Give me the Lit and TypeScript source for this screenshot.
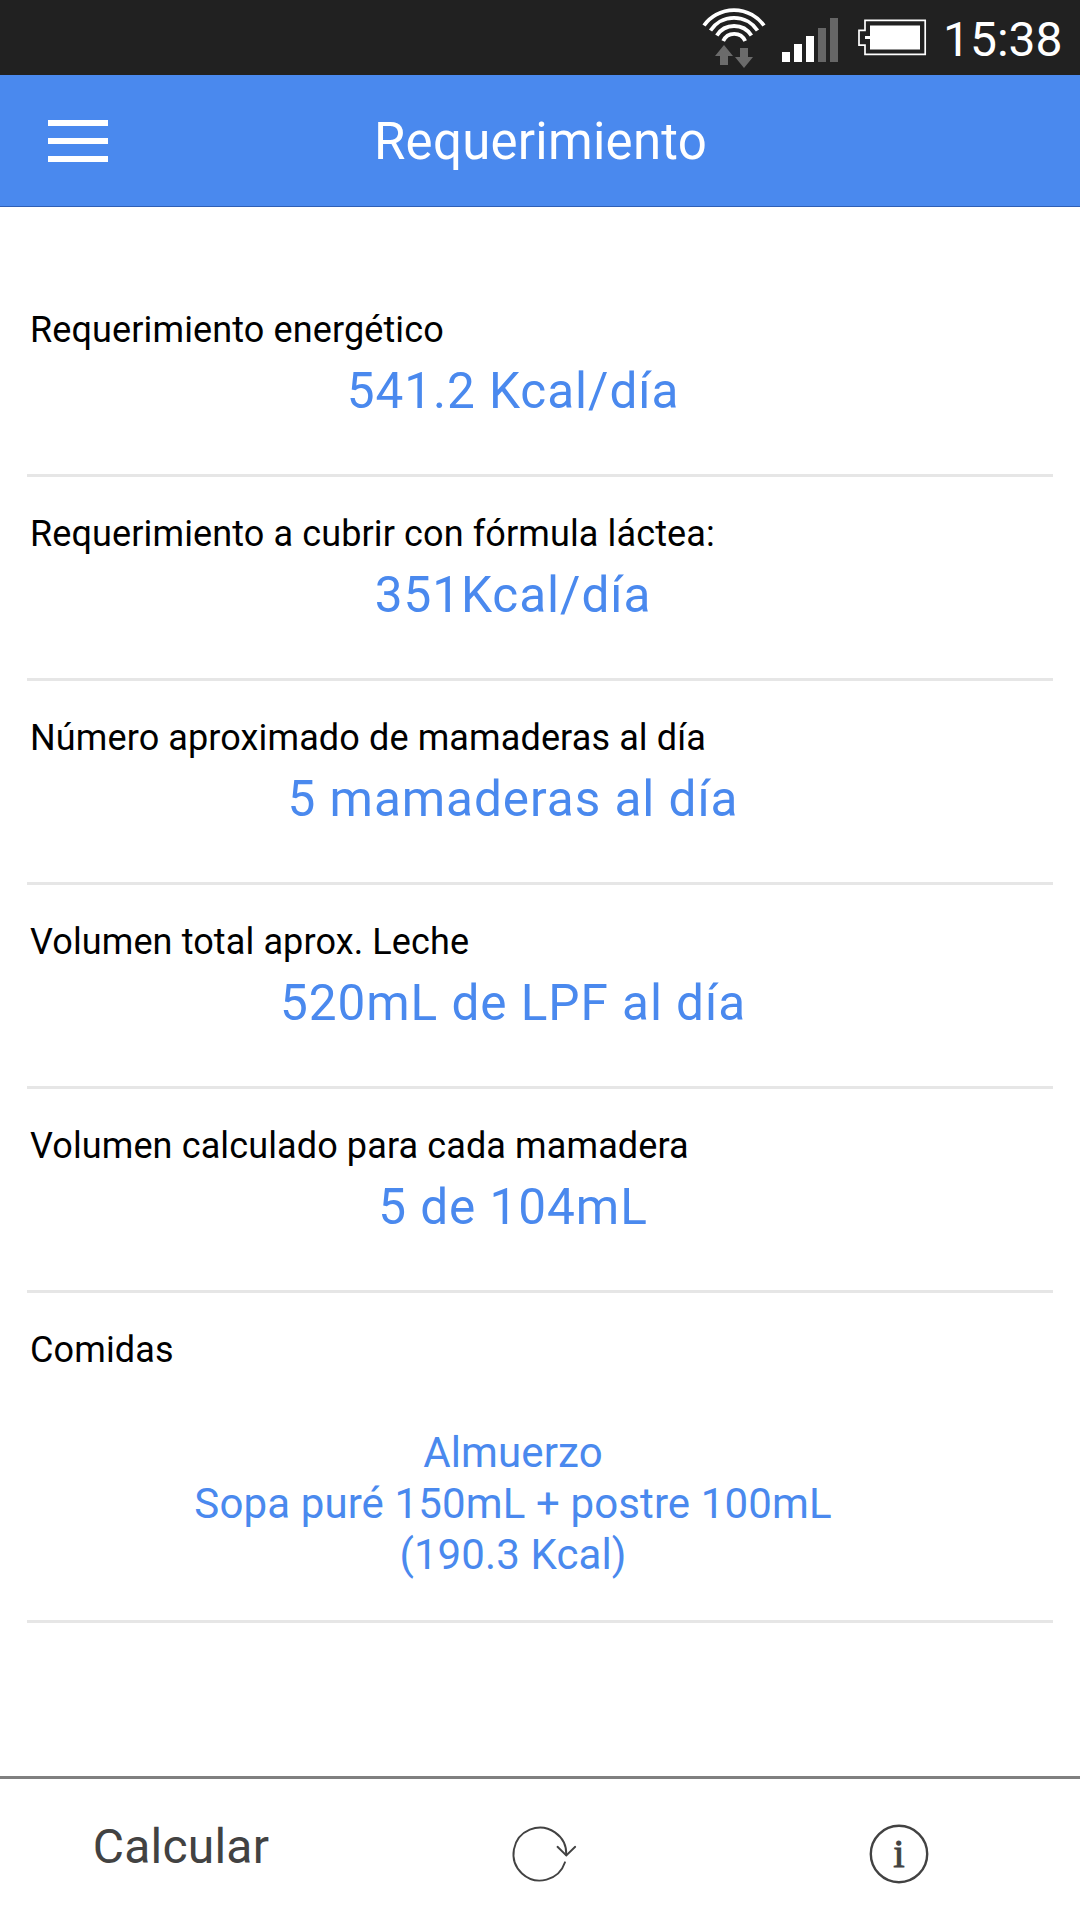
import { LitElement, html, css } from "lit";
import { customElement, property } from "lit/decorators.js";

interface Requirement {
  label: string;
  value: string;
}

const REQUIREMENTS: Requirement[] = [
  { label: "Requerimiento energético", value: "541.2 Kcal/día" },
  { label: "Requerimiento a cubrir con fórmula láctea:", value: "351Kcal/día" },
  { label: "Número aproximado de mamaderas al día", value: "5 mamaderas al día" },
  { label: "Volumen total aprox. Leche", value: "520mL de LPF al día" },
  { label: "Volumen calculado para cada mamadera", value: "5 de 104mL" },
];

@customElement("status-bar")
class StatusBar extends LitElement {
  static styles = css`
    :host {
      display: flex;
      height: 75px;
      background: #212121;
      color: #fff;
      justify-content: flex-end;
    }
    .icons {
      display: block;
      width: 240px;
      height: 75px;
    }
    .time {
      width: 140px;
      box-sizing: border-box;
      padding-left: 3px;
      font-size: 48px;
      line-height: 80px;
      white-space: nowrap;
    }
  `;
  render() {
    return html`
      <svg class="icons" viewBox="700 0 240 75">
        <g fill="none" stroke="#fff" stroke-width="3.8">
          <path d="M704 25.5A37 37 0 0 1 764 25.5" />
          <path d="M710.5 30.5A28.3 28.3 0 0 1 757.5 30.5" />
          <path d="M716.8 35.5A20.5 20.5 0 0 1 751.4 35.5" />
          <path d="M723.2 41A12 12 0 0 1 745.2 41" />
        </g>
        <g fill="#6b6b6b">
          <path d="M724 45L733 56H728V65H720V56H715Z" />
          <path d="M740 48H748V57H753L744 68L735 57H740Z" />
        </g>
        <g fill="#fff">
          <rect x="782" y="52" width="8" height="10" />
          <rect x="794" y="44" width="8" height="18" />
          <rect x="806" y="36" width="8" height="26" />
        </g>
        <g fill="#666">
          <rect x="818" y="28" width="8" height="34" />
          <rect x="830" y="18" width="8" height="44" />
        </g>
        <path
          d="M865 20.4H925.2V54.4H865V45.2H859V30.4H865Z"
          fill="none"
          stroke="#fff"
          stroke-width="1.7"
        />
        <path d="M870 25.5H920V49.5H870V39H865V36H870Z" fill="#fff" />
      </svg>
      <div class="time">15:38</div>
    `;
  }
}

@customElement("title-bar")
class TitleBar extends LitElement {
  @property() heading = "";
  static styles = css`
    :host {
      display: grid;
      grid-template-columns: 156px 1fr 156px;
      align-items: center;
      height: 132px;
      box-sizing: border-box;
      background: #4a89ee;
      border-bottom: 1px solid #2f5fb5;
      color: #fff;
    }
    .menu {
      display: flex;
      flex-direction: column;
      gap: 12px;
      width: 60px;
      margin-left: 48px;
    }
    .line {
      height: 6px;
      background: #fff;
    }
    .heading {
      padding: 2px 0 0 1px;
      text-align: center;
      font-size: 51px;
      line-height: 60px;
      letter-spacing: 0.25px;
    }
  `;
  render() {
    return html`
      <div class="menu">
        <div class="line"></div>
        <div class="line"></div>
        <div class="line"></div>
      </div>
      <div class="heading">${this.heading}</div>
      <div></div>
    `;
  }
}

@customElement("bottom-bar")
class BottomBar extends LitElement {
  static styles = css`
    :host {
      display: grid;
      grid-template-columns: repeat(3, 360px);
      height: 144px;
      box-sizing: border-box;
      border-top: 3px solid #808080;
      color: #424242;
    }
    .item {
      display: flex;
      justify-content: center;
    }
    .text {
      font-size: 48px;
      line-height: 60px;
      padding: 38px 0 0 2px;
      letter-spacing: 0.2px;
    }
    .icon {
      width: 80px;
      height: 80px;
      margin-top: 35px;
    }
    .glyph {
      font-family: "Liberation Serif", serif;
      font-size: 41px;
      fill: #424242;
      stroke: #424242;
      stroke-width: 0.9px;
    }
  `;
  render() {
    return html`
      <div class="item"><span class="text">Calcular</span></div>
      <div class="item">
        <svg
          class="icon"
          viewBox="-40 -40 80 80"
          fill="none"
          stroke="#424242"
          stroke-width="1.9"
          stroke-linecap="round"
        >
          <path d="M25 8.3A26.4 26.4 0 1 1 26.3 1" />
          <path d="M17.5 -7.2L26.3 1.5L35.2 -7.2" />
        </svg>
      </div>
      <div class="item">
        <svg class="icon" viewBox="-40 -40 80 80">
          <circle r="28.2" cx="-1" fill="none" stroke="#424242" stroke-width="2.4" />
          <text class="glyph" x="-1" y="12.6" text-anchor="middle">i</text>
        </svg>
      </div>
    `;
  }
}

@customElement("app-root")
class AppRoot extends LitElement {
  static styles = css`
    :host {
      display: flex;
      flex-direction: column;
      width: 1080px;
      height: 1920px;
      overflow: hidden;
      background: #fff;
      font-family: Roboto, sans-serif;
    }
    .content {
      flex: 1;
      padding: 66px 27px 0;
    }
    .row {
      height: 204px;
      box-sizing: border-box;
      padding-top: 36px;
      border-bottom: 3px solid #e6e6e6;
    }
    .row.meals {
      height: 330px;
    }
    .label {
      padding-left: 3px;
      font-size: 36px;
      line-height: 42px;
      letter-spacing: 0.12px;
      color: #000;
    }
    .value {
      margin: 10px 54px 0 0;
      text-align: center;
      font-size: 49.5px;
      line-height: 61px;
      letter-spacing: 0.95px;
      color: #4a89ee;
    }
    .menu {
      margin: 56px 54px 0 0;
      text-align: center;
      font-size: 42px;
      line-height: 51px;
      letter-spacing: 0.12px;
      color: #4a89ee;
    }
  `;
  render() {
    return html`
      <status-bar></status-bar>
      <title-bar heading="Requerimiento"></title-bar>
      <div class="content">
        ${REQUIREMENTS.map(
          (r) => html`
            <div class="row">
              <div class="label">${r.label}</div>
              <div class="value">${r.value}</div>
            </div>
          `
        )}
        <div class="row meals">
          <div class="label">Comidas</div>
          <div class="menu">
            <div>Almuerzo</div>
            <div>Sopa puré 150mL + postre 100mL</div>
            <div>(190.3 Kcal)</div>
          </div>
        </div>
      </div>
      <bottom-bar></bottom-bar>
    `;
  }
}
